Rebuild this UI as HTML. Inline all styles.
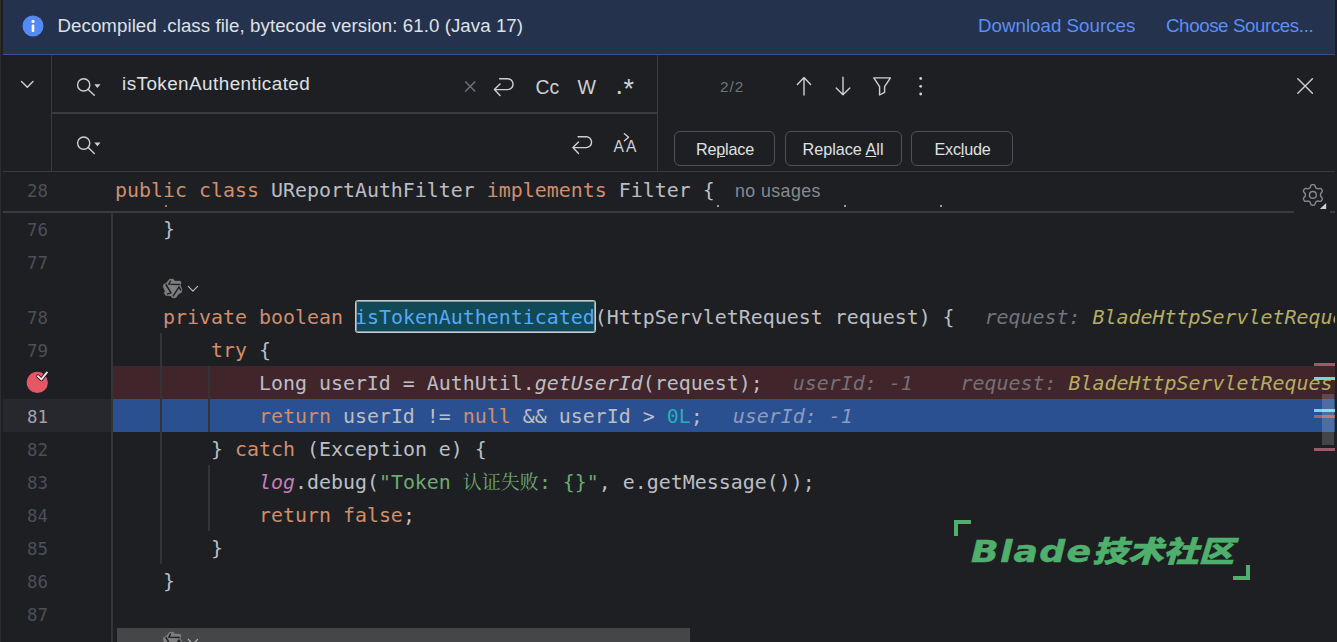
<!DOCTYPE html>
<html lang="en">
<head>
<meta charset="utf-8">
<title>Decompiled class</title>
<style>
*{box-sizing:border-box;margin:0;padding:0}
html,body{width:1337px;height:642px;overflow:hidden;background:#1e1f22}
body{position:relative;font-family:"Liberation Sans","Noto Sans CJK SC",sans-serif;color:#dfe1e5}
.abs{position:absolute}
svg{position:absolute;overflow:visible}
.ui{font-family:"Liberation Sans",sans-serif;white-space:nowrap}
#banner{left:3px;top:0;width:1334px;height:55px;background:#25324d;border-bottom:1px solid #35538f}
#banner .t{top:14px;font-size:18.7px;line-height:24px;color:#dfe1e5}
#banner .lnk{color:#5a8ff5}
.vl{width:1px;background:#393b40}
.hline{height:1px;background:#393b40}
.code{font-family:"DejaVu Sans Mono","Liberation Mono",monospace;font-size:19.93px;line-height:33px;height:33px;white-space:pre;color:#bcbec4;left:115px;margin-top:1px}
.ln{font-family:"DejaVu Sans Mono","Liberation Mono",monospace;font-size:17.4px;line-height:33px;height:33px;color:#4b5059;left:0;width:48px;text-align:right;margin-top:2px}
.k{color:#cf8e6d}.s{color:#6aab73}.n{color:#2aacb8}
.h{color:#70747b;font-style:italic;margin-left:30px}
.v{color:#b3ae60;font-style:italic}
.i{font-style:italic}.p{color:#c77dbb;font-style:italic}
.cj{font-family:"Noto Serif CJK SC","Noto Sans CJK SC",serif;font-size:19px;line-height:0}
.btn{top:131px;height:35px;border:1px solid #4e5157;border-radius:6px;font-size:16.2px;line-height:34px;text-align:center;color:#dfe1e5}
.ic{stroke:#ced0d6;fill:none;stroke-width:1.4;stroke-linecap:round;stroke-linejoin:round}
.mk{left:1314px;width:21px;height:3px}
</style>
</head>
<body>
<div class="abs" style="left:0;top:0;width:1px;height:642px;background:#2b2d30"></div>
<div class="abs" style="left:1335px;top:0;width:2px;height:642px;background:#1e1f22;z-index:20"></div>

<div id="banner" class="abs">
  <svg style="left:19px;top:15px" width="22" height="22" viewBox="0 0 22 22"><circle cx="11" cy="11" r="10.5" fill="#548af7"/><circle cx="11" cy="6.4" r="1.6" fill="#fff"/><rect x="9.7" y="9.4" width="2.6" height="7.6" rx="1" fill="#fff"/></svg>
  <div class="abs ui t" style="left:54.5px;letter-spacing:.06px">Decompiled .class file, bytecode version: 61.0 (Java 17)</div>
  <div class="abs ui t lnk" style="left:975px;letter-spacing:.03px">Download Sources</div>
  <div class="abs ui t lnk" style="left:1163px;letter-spacing:-.38px">Choose Sources...</div>
</div>

<!-- search / replace panel -->
<div class="abs vl" style="left:51px;top:55px;height:116px"></div>
<div class="abs vl" style="left:657px;top:55px;height:116px"></div>
<div class="abs hline" style="left:51px;top:112px;width:607px;height:2px"></div>
<div class="abs hline" style="left:3px;top:171px;width:1332px"></div>

<svg style="left:0;top:0" width="1337" height="172" viewBox="0 0 1337 172">
  <!-- collapse chevron -->
  <path class="ic" d="M21.5 81.5 L27.3 87.2 L33 81.5"/>
  <!-- search icons -->
  <g class="ic"><circle cx="83.7" cy="84.9" r="6.1"/><path d="M88.2 89.4 L94.3 95.2"/><path d="M94.3 84.3 h6.2 l-3.1 3.8z" fill="#ced0d6" stroke="none"/></g>
  <g class="ic" transform="translate(0,58.2)"><circle cx="83.7" cy="84.9" r="6.1"/><path d="M88.2 89.4 L94.3 95.2"/><path d="M94.3 84.3 h6.2 l-3.1 3.8z" fill="#ced0d6" stroke="none"/></g>
  <!-- clear x -->
  <path d="M465.2 81.4 L475.2 91.4 M475.2 81.4 L465.2 91.4" stroke="#6f737a" stroke-width="1.4" fill="none"/>
  <!-- newline arrows -->
  <path id="nl" class="ic" d="M499.6 78.7 H507.6 A5.45 5.45 0 0 1 507.6 89.6 H494.6 M500 84 L494.4 89.6 L500 95.4"/>
  <path class="ic" transform="translate(78.5,58)" d="M499.6 78.7 H507.6 A5.45 5.45 0 0 1 507.6 89.6 H494.6 M500 84 L494.4 89.6 L500 95.4"/>
  <!-- up / down arrows -->
  <path class="ic" d="M804 77.6 V95 M797.4 84.4 L804 77.6 L810.6 84.4"/>
  <path class="ic" d="M843 77.2 V94.8 M836.2 88 L843 94.8 L849.8 88"/>
  <!-- filter -->
  <path class="ic" d="M873.8 77.9 H890.4 L884.6 86.6 V92.4 L879.6 95 V86.6 Z"/>
  <!-- more -->
  <g fill="#ced0d6"><circle cx="920.7" cy="78.5" r="1.4"/><circle cx="920.7" cy="86.3" r="1.4"/><circle cx="920.7" cy="94" r="1.4"/></g>
  <!-- close -->
  <path class="ic" d="M1297.8 78.8 L1312.4 93.2 M1312.4 78.8 L1297.8 93.2"/>
  <!-- preserve-case caret -->
  <path class="ic" stroke-width="1.2" d="M624.4 133.8 L628.6 137.2 L624.4 140.8"/>
</svg>

<div class="abs ui" style="left:122px;top:72px;font-size:18.9px;line-height:24px;letter-spacing:.43px;color:#dfe1e5">isTokenAuthenticated</div>
<div class="abs ui" style="left:535.5px;top:75px;font-size:19.4px;line-height:24px;color:#ced0d6">Cc</div>
<div class="abs ui" style="left:577.5px;top:75px;font-size:19.6px;line-height:24px;color:#ced0d6">W</div>
<div class="abs ui" style="left:615.6px;top:72.7px;font-size:27px;line-height:24px;color:#ced0d6">.</div>
<div class="abs ui" style="left:623.5px;top:76.5px;font-size:27px;line-height:24px;color:#ced0d6">*</div>
<div class="abs ui" style="left:613.5px;top:138px;font-size:15.6px;line-height:18px;letter-spacing:2.2px;color:#ced0d6">AA</div>
<div class="abs ui" style="left:720px;top:78px;font-size:15.4px;line-height:18px;letter-spacing:.9px;color:#6f737a">2/2</div>
<div class="abs btn ui" style="left:674px;width:101px;letter-spacing:-.2px;padding-left:1px">Re<u>p</u>lace</div>
<div class="abs btn ui" style="left:784.5px;width:117px">Replace <u>A</u>ll</div>
<div class="abs btn ui" style="left:910.5px;width:102px;letter-spacing:-.25px;padding-left:2px">Exc<u>l</u>ude</div>

<!-- editor -->
<div class="abs" style="left:111px;top:213px;width:2px;height:429px;background:#313438"></div>

<!-- row backgrounds -->
<div class="abs" style="left:113px;top:366px;width:1222px;height:33px;background:#40252b"></div>
<div class="abs" style="left:3px;top:399px;width:108px;height:33px;background:#26282e"></div>
<div class="abs" style="left:113px;top:399px;width:1222px;height:33px;background:#2b5091"></div>
<!-- indent guides -->
<div class="abs" style="left:160px;top:333px;width:2px;height:231px;background:#313438"></div>
<div class="abs" style="left:208px;top:366px;width:2px;height:66px;background:#313438"></div>
<div class="abs" style="left:208px;top:465px;width:2px;height:66px;background:#313438"></div>

<!-- sticky line -->
<div class="abs ln" style="top:173px">28</div>
<div class="abs code" style="top:173px"><span class="k">public class</span> UReportAuthFilter <span class="k">implements</span> Filter {</div>
<div class="abs ui" style="left:735px;top:179px;font-size:17.8px;line-height:24px;letter-spacing:.42px;color:#868a91">no usages</div>
<div class="abs" style="left:3px;top:211px;width:1291px;height:2px;background:#393b40"></div>
<div class="abs" style="left:1330px;top:211px;width:5px;height:2px;background:#393b40"></div>
<svg style="left:1300px;top:182px" width="30" height="30" viewBox="1300 182 30 30">
  <g fill="none" stroke="#868a91" stroke-width="1.4" stroke-linejoin="round">
    <path d="M1312.90 184.60 L1313.80 184.64 L1314.64 185.02 L1315.22 186.25 L1315.59 187.50 L1316.11 188.01 L1316.70 188.32 L1317.26 188.67 L1317.96 188.87 L1319.23 188.57 L1320.58 188.45 L1321.34 188.99 L1321.82 189.75 L1322.23 190.55 L1322.33 191.47 L1321.55 192.58 L1320.65 193.53 L1320.47 194.24 L1320.50 194.90 L1320.47 195.56 L1320.65 196.27 L1321.55 197.22 L1322.33 198.33 L1322.23 199.25 L1321.82 200.05 L1321.34 200.81 L1320.58 201.35 L1319.23 201.23 L1317.96 200.93 L1317.26 201.13 L1316.70 201.48 L1316.11 201.79 L1315.59 202.30 L1315.22 203.55 L1314.64 204.78 L1313.80 205.16 L1312.90 205.20 L1312.00 205.16 L1311.16 204.78 L1310.58 203.55 L1310.21 202.30 L1309.69 201.79 L1309.10 201.48 L1308.54 201.13 L1307.84 200.93 L1306.57 201.23 L1305.22 201.35 L1304.46 200.81 L1303.98 200.05 L1303.57 199.25 L1303.47 198.33 L1304.25 197.22 L1305.15 196.27 L1305.33 195.56 L1305.30 194.90 L1305.33 194.24 L1305.15 193.53 L1304.25 192.58 L1303.47 191.47 L1303.57 190.55 L1303.98 189.75 L1304.46 188.99 L1305.22 188.45 L1306.57 188.57 L1307.84 188.87 L1308.54 188.67 L1309.10 188.32 L1309.69 188.01 L1310.21 187.50 L1310.58 186.25 L1311.16 185.02 L1312.00 184.64 Z"/>
    <circle cx="1312.9" cy="194.9" r="3.4"/>
  </g>
  <path d="M1319.8 208.9 H1326.2 V202.9 Z" fill="#ced0d6"/>
</svg>

<div class="abs" style="left:165px;top:205px;width:2px;height:2px;background:#a8765c"></div><div class="abs" style="left:717px;top:205px;width:2px;height:2px;background:#9a9ca2"></div><div class="abs" style="left:844px;top:205px;width:2px;height:2px;background:#9a9ca2"></div><div class="abs" style="left:940px;top:205px;width:2px;height:2px;background:#9a9ca2"></div>
<div class="abs ln" style="top:212px">76</div>
<div class="abs code" style="top:212px">    }</div>
<div class="abs ln" style="top:245px">77</div>

<div class="abs ln" style="top:300px">78</div>
<div class="abs" style="left:355px;top:300px;width:241px;height:33px;background:#114957;border:1px solid #c9ccd6;box-shadow:inset 0 0 0 1px rgba(201,204,214,.6);border-radius:2.5px"></div>
<div class="abs code" style="top:300px">    <span class="k">private boolean</span> <span style="color:#56a8f5">isTokenAuthenticated</span>(HttpServletRequest request) {<span class="h">request: </span><span class="v">BladeHttpServletRequestWrapper</span></div>
<div class="abs ln" style="top:333px">79</div>
<div class="abs code" style="top:333px">        <span class="k">try</span> {</div>
<div class="abs code" style="top:366px">            Long userId = AuthUtil.<span class="i">getUserId</span>(request);<span class="h" style="color:#776f77">userId: -1    request: </span><span class="v">BladeHttpServletRequestWrapper</span></div>
<div class="abs ln" style="top:399px;color:#a1a3ab">81</div>
<div class="abs code" style="top:399px">            <span class="k">return</span> userId != <span class="k">null</span> &amp;&amp; userId &gt; <span class="n">0L</span>;<span class="h" style="color:#8a9cc0">userId: -1</span></div>
<div class="abs ln" style="top:432px">82</div>
<div class="abs code" style="top:432px">        } <span class="k">catch</span> (Exception e) {</div>
<div class="abs ln" style="top:465px">83</div>
<div class="abs code" style="top:465px">            <span class="p">log</span>.debug(<span class="s">"Token <span class="cj">认证失败</span>: {}"</span>, e.getMessage());</div>
<div class="abs ln" style="top:498px">84</div>
<div class="abs code" style="top:498px">            <span class="k">return false</span>;</div>
<div class="abs ln" style="top:531px">85</div>
<div class="abs code" style="top:531px">        }</div>
<div class="abs ln" style="top:564px">86</div>
<div class="abs code" style="top:564px">    }</div>
<div class="abs ln" style="top:597px">87</div>

<!-- breakpoint -->
<svg style="left:24px;top:368px" width="28" height="28" viewBox="24 368 28 28">
  <circle cx="37.3" cy="382.4" r="10.6" fill="#e55765"/>
  <path d="M38 376.2 L41.4 379.4 L46.8 372.6" fill="none" stroke="#1e1f22" stroke-width="3.6" stroke-linecap="round" stroke-linejoin="round"/>
  <path d="M38 376.2 L41.4 379.4 L46.8 372.6" fill="none" stroke="#e8eaee" stroke-width="1.8" stroke-linecap="square" stroke-linejoin="miter"/>
</svg>

<!-- error stripe + scrollbar -->
<div class="abs mk" style="top:363px;background:#9c5a6a"></div>
<div class="abs mk" style="top:377px;background:#6fd8e0"></div>
<div class="abs mk" style="top:408.5px;background:#6fd8e0"></div>
<div class="abs mk" style="top:414.5px;background:#a86368"></div>
<div class="abs mk" style="top:447.5px;background:#9c5a6a"></div>
<div class="abs" style="left:1322px;top:394px;width:12px;height:51px;background:rgba(255,255,255,.17)"></div>
<div class="abs" style="left:117px;top:628px;width:572.5px;height:14px;background:#454648"></div>

<!-- inlay icons -->
<svg id="lg1" style="left:160px;top:276px" width="42" height="24" viewBox="160 276 42 24"><g id="lg"><polygon fill="#7e7e7e" stroke="#7e7e7e" stroke-width=".3" stroke-linejoin="round" points="169.56,279.02 173.26,279.02 174.66,280.98 180.24,280.98 181.20,282.72 180.33,285.12 182.07,289.26 181.77,292.32 178.28,294.15 175.97,297.77 172.39,297.90 170.87,295.89 165.63,295.46 164.11,293.19 164.98,291.23 163.02,286.43 163.45,284.47 166.37,282.94"/><g fill="none" stroke="#1e1f22" stroke-width="1.45" stroke-linejoin="miter"><polyline points="170.73,280.54 168.90,284.12 179.81,284.47"/><polyline points="165.76,284.25 171.00,292.84 166.94,294.15"/><polyline points="180.90,290.48 178.93,287.08 172.91,296.33"/></g><path d="M188.3 286.3 L192.9 291.2 L197.6 286.3" fill="none" stroke="#b8bcc4" stroke-width="1.15" stroke-linecap="round" stroke-linejoin="round"/></g></svg>
<svg style="left:160px;top:630.3px" width="42" height="11.7" viewBox="160 277 42 11.7"><use href="#lg"/></svg>

<!-- watermark -->
<div class="abs" style="left:954.3px;top:520.4px;width:16.6px;height:15.6px;border-left:4.5px solid #4fb06d;border-top:4.3px solid #4fb06d"></div>
<div class="abs" style="left:1233.2px;top:564.8px;width:16.7px;height:15.6px;border-right:4.5px solid #4fb06d;border-bottom:4.3px solid #4fb06d"></div>
<div class="abs" id="wm" style="left:970.5px;top:528.5px;height:40px;line-height:40px;white-space:nowrap;color:#4fb06d;font-style:italic;transform:scaleX(1.21);transform-origin:0 50%;-webkit-text-stroke:.5px #4fb06d"><span style="font-family:'DejaVu Sans','Liberation Sans',sans-serif;font-weight:bold;font-size:30px;letter-spacing:1px">Blade</span><span style="font-family:'Noto Sans CJK SC',sans-serif;font-weight:900;font-size:29.3px">技术社区</span></div>

</body>
</html>
